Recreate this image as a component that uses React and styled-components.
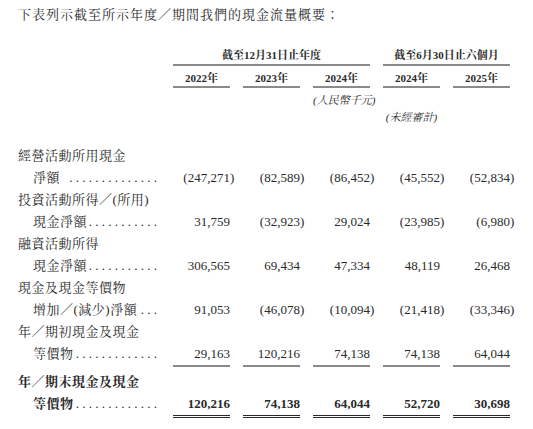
import styled, { createGlobalStyle } from "styled-components";

const Global = createGlobalStyle`
    body {
        margin: 0;
        background: #fff;
        color: #2a2a2a;
        font-family: "Liberation Serif", "Noto Serif CJK TC", "Noto Sans CJK TC", serif;
    }
`;

const Page = styled.div`
    padding: 5px 0 0 18px;
    width: 515px;
`;
const Title = styled.div`
    font-size: 13px;
    line-height: 20px;
    letter-spacing: 1px;
`;
const Row = styled.div`
    display: grid;
    grid-template-columns: 142px repeat(5, 57px);
    column-gap: 13px;
    margin-top: ${props => props.$gap || 0}px;
`;
const GroupHead = styled.div`
    grid-column: ${props => props.$span};
    text-align: center;
    font-size: 11px;
    font-weight: 700;
    line-height: 16px;
    padding-bottom: 1px;
    border-bottom: 2px solid #8a8a8a;
`;
const YearHead = styled.div`
    text-align: center;
    font-size: 11px;
    font-weight: 700;
    line-height: 16px;
    border-bottom: 2px solid #8a8a8a;
`;
const Note = styled.div`
    grid-column: ${props => props.$col};
    text-align: ${props => props.$align};
    font-size: 11px;
    font-style: italic;
    line-height: 16px;
    white-space: nowrap;
`;
const Label = styled.div`
    grid-column: 1 / -1;
    font-size: 13px;
    letter-spacing: 0.5px;
    line-height: 22px;
    font-weight: ${props => props.$bold ? 700 : 400};
`;
const SubLabel = styled.div`
    display: flex;
    padding: 0 3px 0 15px;
    font-size: 13px;
    letter-spacing: 0.5px;
    line-height: 22px;
    white-space: nowrap;
    font-weight: ${props => props.$bold ? 700 : 400};
`;
const Leader = styled.span`
    flex: 1;
    text-align: right;
    letter-spacing: 0;
    font-weight: 400;
`;
const Value = styled.div`
    text-align: right;
    font-size: 13px;
    line-height: 22px;
    white-space: nowrap;
    font-weight: ${props => props.$bold ? 700 : 400};
    ${props => props.$rule === "single" ? `
    border-bottom: 2px solid #8a8a8a;
  ` : props.$rule === "double" ? `
    border-bottom: 3px double #2a2a2a;
  ` : ``}
`;
const Paren = styled.span`
    margin-right: -0.33em;
`;

const rows = [
    { l1: "經營活動所用現金", l2: "淨額", dots: 14, values: [-247271, -82589, -86452, -45552, -52834] },
    { l1: "投資活動所得／(所用)", l2: "現金淨額", dots: 11, values: [31759, -32923, 29024, -23985, -6980] },
    { l1: "融資活動所得", l2: "現金淨額", dots: 11, values: [306565, 69434, 47334, 48119, 26468] },
    { l1: "現金及現金等價物", l2: "增加／(減少)淨額", dots: 3, values: [91053, -46078, -10094, -21418, -33346] },
    { l1: "年／期初現金及現金", l2: "等價物", dots: 13, values: [29163, 120216, 74138, 74138, 64044], rule: "single" },
    { l1: "年／期末現金及現金", l2: "等價物", dots: 13, values: [120216, 74138, 64044, 52720, 30698], rule: "double", bold: true, gap: 4 },
];

function Num({ n }) {
    const s = Math.abs(n).toLocaleString("en-US");
    if (n < 0) return <>({s}<Paren>)</Paren></>;
    return <>{s}</>;
}

export default function App() {
    return (
        <Page>
            <Global />
            <Title>下表列示截至所示年度／期間我們的現金流量概要：</Title>

            <Row $gap={22}>
                <GroupHead $span="2 / 5">截至12月31日止年度</GroupHead>
                <GroupHead $span="5 / 7">截至6月30日止六個月</GroupHead>
            </Row>
            <Row $gap={4}>
                <div />
                {["2022年", "2023年", "2024年", "2024年", "2025年"].map((y, i) => (
                    <YearHead key={i}>{y}</YearHead>
                ))}
            </Row>
            <Row $gap={4}>
                <Note $col="4" $align="right">(人民幣千元)</Note>
            </Row>
            <Row $gap={1}>
                <Note $col="5" $align="center">(未經審計)</Note>
            </Row>

            {rows.map((r, i) => (
                <Row key={i} $gap={i === 0 ? 20 : r.gap || 0}>
                    <Label $bold={r.bold}>{r.l1}</Label>
                    <SubLabel $bold={r.bold}>
                        {r.l2}
                        <Leader>{Array(r.dots).fill(".").join(" ")}</Leader>
                    </SubLabel>
                    {r.values.map((v, j) => (
                        <Value key={j} $rule={r.rule} $bold={r.bold}>
                            <Num n={v} />
                        </Value>
                    ))}
                </Row>
            ))}
        </Page>
    );
}
